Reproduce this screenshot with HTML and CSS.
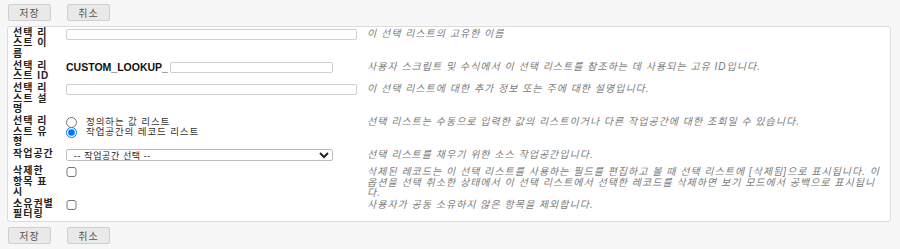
FILE: index.html
```html
<!DOCTYPE html>
<html lang="ko">
<head>
    <meta charset="UTF-8">
    <meta name="viewport" content="width=device-width, initial-scale=1.0">
    <title>선택 리스트</title>
    <link rel="stylesheet" href="styles.css">
</head>
<body>
    <!-- 상단 버튼 -->
    <div class="btns top">
        <button class="btn">저장</button>
        <button class="btn">취소</button>
    </div>

    <!-- 입력 폼 -->
    <div class="panel">
        <table class="form">
            <tr>
                <td class="lbl">선택 리스트 이름</td>
                <td class="fld"><input type="text" class="txt"></td>
                <td class="desc">이 선택 리스트의 고유한 이름</td>
            </tr>
            <tr>
                <td class="lbl">선택 리스트 ID</td>
                <td class="fld"><span class="prefix">CUSTOM_LOOKUP_</span><input type="text" class="txt short"></td>
                <td class="desc">사용자 스크립트 및 수식에서 이 선택 리스트를 참조하는 데 사용되는 고유 ID입니다.</td>
            </tr>
            <tr>
                <td class="lbl">선택 리스트 설명</td>
                <td class="fld"><input type="text" class="txt"></td>
                <td class="desc">이 선택 리스트에 대한 추가 정보 또는 주에 대한 설명입니다.</td>
            </tr>
            <tr>
                <td class="lbl">선택 리스트 유형</td>
                <td class="fld">
                    <label class="opt"><input type="radio" name="kind">정의하는 값 리스트</label>
                    <label class="opt"><input type="radio" name="kind" checked>작업공간의 레코드 리스트</label>
                </td>
                <td class="desc">선택 리스트는 수동으로 입력한 값의 리스트이거나 다른 작업공간에 대한 조회일 수 있습니다.</td>
            </tr>
            <tr>
                <td class="lbl">작업공간</td>
                <td class="fld">
                    <select class="sel">
                        <option>-- 작업공간 선택 --</option>
                    </select>
                </td>
                <td class="desc">선택 리스트를 채우기 위한 소스 작업공간입니다.</td>
            </tr>
            <tr>
                <td class="lbl">삭제한 항목 표시</td>
                <td class="fld"><input type="checkbox" class="chk"></td>
                <td class="desc">삭제된 레코드는 이 선택 리스트를 사용하는 필드를 편집하고 볼 때 선택 리스트에 [삭제됨]으로 표시됩니다. 이 옵션을 선택 취소한 상태에서 이 선택 리스트에서 선택한 레코드를 삭제하면 보기 모드에서 공백으로 표시됩니다.</td>
            </tr>
            <tr>
                <td class="lbl">소유권별 필터링</td>
                <td class="fld"><input type="checkbox" class="chk"></td>
                <td class="desc">사용자가 공동 소유하지 않은 항목을 제외합니다.</td>
            </tr>
        </table>
    </div>

    <!-- 하단 버튼 -->
    <div class="btns bottom">
        <button class="btn">저장</button>
        <button class="btn">취소</button>
    </div>
</body>
</html>
```

FILE: styles.css
```css
body {
    margin: 0;
    background: #f7f7f7;
    font-family: "Liberation Sans", "Noto Sans CJK KR", sans-serif;
    font-size: 10px;
    color: #333;
}

.btns {
    display: flex;
    gap: 16px;
    padding-left: 8px;
}
.btns.top { padding-top: 4px; }
.btns.bottom { padding-top: 5px; }

.btn {
    width: 43px;
    height: 17px;
    padding: 0;
    font-family: inherit;
    font-size: 10px;
    letter-spacing: 1px;
    color: #555;
    background: #e9e9e9;
    border: 1px solid #cfcfcf;
    border-radius: 2px;
}

.panel {
    margin: 5px 9px 0 7px;
    background: #fff;
    border: 1px solid #dcdcdc;
    border-radius: 3px;
}

.form {
    width: 100%;
    border-collapse: collapse;
}
.form td {
    vertical-align: top;
    padding: 1px 0;
}

.lbl {
    width: 42px;
    padding-left: 5px !important;
    padding-right: 11px !important;
    font-weight: bold;
    letter-spacing: 1px;
    line-height: 10.3px;
    color: #222;
}

.fld {
    width: 291px;
    padding-right: 10px !important;
    line-height: 10px;
}

.desc {
    padding-top: 2px !important;
    padding-bottom: 0 !important;
    padding-right: 4px !important;
    font-style: italic;
    letter-spacing: 1px;
    color: #7a7a7a;
    line-height: 10.3px;
}

.txt {
    box-sizing: border-box;
    width: 291px;
    height: 11px;
    margin: 1px 0 0;
    padding: 0 3px;
    border: 1px solid #cfcfcf;
    border-radius: 2px;
    vertical-align: top;
}
.txt.short { width: 163px; }

.prefix {
    display: inline-block;
    width: 104px;
    margin-top: 1px;
    font-weight: bold;
    font-size: 10.5px;
    line-height: 11px;
    vertical-align: top;
    color: #111;
}

.opt {
    display: flex;
    align-items: center;
    gap: 9px;
    height: 10px;
    font-size: 9.5px;
    letter-spacing: 0.9px;
    white-space: nowrap;
}
.opt:first-child { margin-top: 1px; }
.opt input {
    width: 11px;
    height: 11px;
    margin: 0;
}

.sel {
    box-sizing: border-box;
    width: 267px;
    height: 12px;
    margin: 0 0 3px;
    padding: 0 0 0 3px;
    font-family: inherit;
    font-size: 9px;
    letter-spacing: 0.6px;
    line-height: 10px;
    border: 1px solid #bdbdbd;
    border-radius: 2px;
    background: #fff;
    color: #222;
    vertical-align: top;
}

.chk {
    width: 11px;
    height: 10px;
    margin: 1px 0 0;
}
```
